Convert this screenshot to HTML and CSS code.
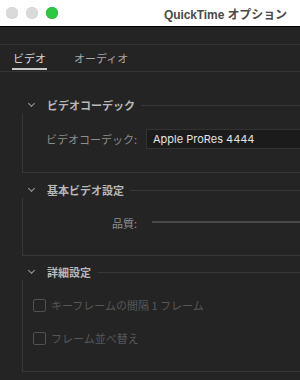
FILE: index.html
```html
<!DOCTYPE html>
<html lang="ja">

<head>
  <meta charset="UTF-8" />
  <meta name="viewport" content="width=device-width, initial-scale=1.0" />
  <title>QuickTime オプション</title>
  <link rel="stylesheet" href="styles.css">
</head>

<body>
  <div class="window">
    <div class="titlebar">
      <div class="lights">
        <span class="light"></span>
        <span class="light"></span>
        <span class="light green"></span>
      </div>
      <div class="title">QuickTime オプション</div>
    </div>
    <div class="toolbar"></div>
    <div class="tabs">
      <div class="tab active">ビデオ</div>
      <div class="tab">オーディオ</div>
    </div>
    <div class="content">
      <fieldset class="group">
        <legend><span class="chevron"></span>ビデオコーデック</legend>
        <div class="row">
          <label class="label">ビデオコーデック:</label>
          <div class="select">Apple ProRes 4444</div>
        </div>
      </fieldset>
      <fieldset class="group second">
        <legend><span class="chevron"></span>基本ビデオ設定</legend>
        <div class="row">
          <label class="label">品質:</label>
          <div class="slider"></div>
        </div>
      </fieldset>
      <fieldset class="group third">
        <legend><span class="chevron"></span>詳細設定</legend>
        <div class="check">
          <span class="box"></span>キーフレームの間隔 1 フレーム
        </div>
        <div class="check">
          <span class="box"></span>フレーム並べ替え
        </div>
      </fieldset>
    </div>
  </div>
</body>

</html>
```

FILE: styles.css
```css
html,
body {
  margin: 0;
  height: 100%;
  overflow: hidden;
  background: #242424;
}

body {
  font-family: "Noto Sans CJK JP", "Liberation Sans", sans-serif;
  font-size: 11px;
}

.window {
  width: 340px;
  height: 380px;
  background: #242424;
}

.titlebar {
  display: flex;
  align-items: center;
  height: 26px;
  background: #ffffff;
  border-bottom: 1px solid #000;
}

.lights {
  display: flex;
  gap: 8px;
  padding-left: 6px;
}

.light {
  width: 12px;
  height: 12px;
  border-radius: 50%;
  background: #dadada;
  box-shadow: inset 0 0 0 0.5px #cfcfcf;
}

.light.green {
  background: #2bc840;
  box-shadow: inset 0 0 0 0.5px #24a934;
}

.title {
  margin-left: 106px;
  font-family: "Liberation Sans", "Noto Sans CJK JP", sans-serif;
  font-size: 12px;
  font-weight: 700;
  letter-spacing: -0.1px;
  color: #4a4a4a;
  white-space: nowrap;
}

.toolbar {
  height: 17px;
  border-bottom: 1px solid #333;
}

.tabs {
  display: flex;
  align-items: flex-end;
  gap: 26px;
  height: 25px;
  padding: 0 0 1px 12px;
  border-bottom: 1px solid #343434;
}

.tab {
  padding: 0 1px 3px;
  line-height: 14px;
  color: #a8a8a8;
  border-bottom: 2px solid transparent;
}

.tab.active {
  color: #d6d6d6;
  border-bottom-color: #c8c8c8;
}

.content {
  padding: 25px 0 0 22px;
}

.group {
  margin: 0;
  padding: 16px 0 23px;
  width: 320px;
  border: 1px solid #383838;
  border-right: none;
}

.group.second {
  margin-top: 9px;
  padding: 15px 0 22px;
}

.group.third {
  margin-top: 8px;
  padding: 15px 0 23px;
}

.group legend {
  display: flex;
  align-items: center;
  padding: 0 6px 0 6px;
  margin-left: -1px;
  line-height: 16px;
  font-weight: 700;
  color: #b8b8b8;
}

.chevron {
  width: 4px;
  height: 4px;
  margin: -3px 13px 0 1px;
  border-right: 1px solid #9c9c9c;
  border-bottom: 1px solid #9c9c9c;
  transform: rotate(45deg);
}

.row {
  display: grid;
  grid-template-columns: 114px 1fr;
  gap: 9px;
  align-items: center;
  height: 20px;
}

.label {
  text-align: right;
  color: #8e8e8e;
}

.select {
  height: 18px;
  line-height: 18px;
  padding-left: 6px;
  background: #1b1b1b;
  border: 1px solid #333;
  border-right: none;
  color: #e2e2e2;
  font-family: "Inter", "Liberation Sans", sans-serif;
  font-size: 11px;
}

.slider {
  height: 2px;
  margin-left: 6px;
  margin-top: -2px;
  background: #4a4a4a;
}

.check {
  display: flex;
  align-items: center;
  gap: 5px;
  height: 20px;
  padding-left: 10px;
  color: #575757;
}

.check + .check {
  margin-top: 13px;
}

.box {
  width: 11px;
  height: 11px;
  border: 1px solid #515151;
  border-radius: 2px;
}
```
